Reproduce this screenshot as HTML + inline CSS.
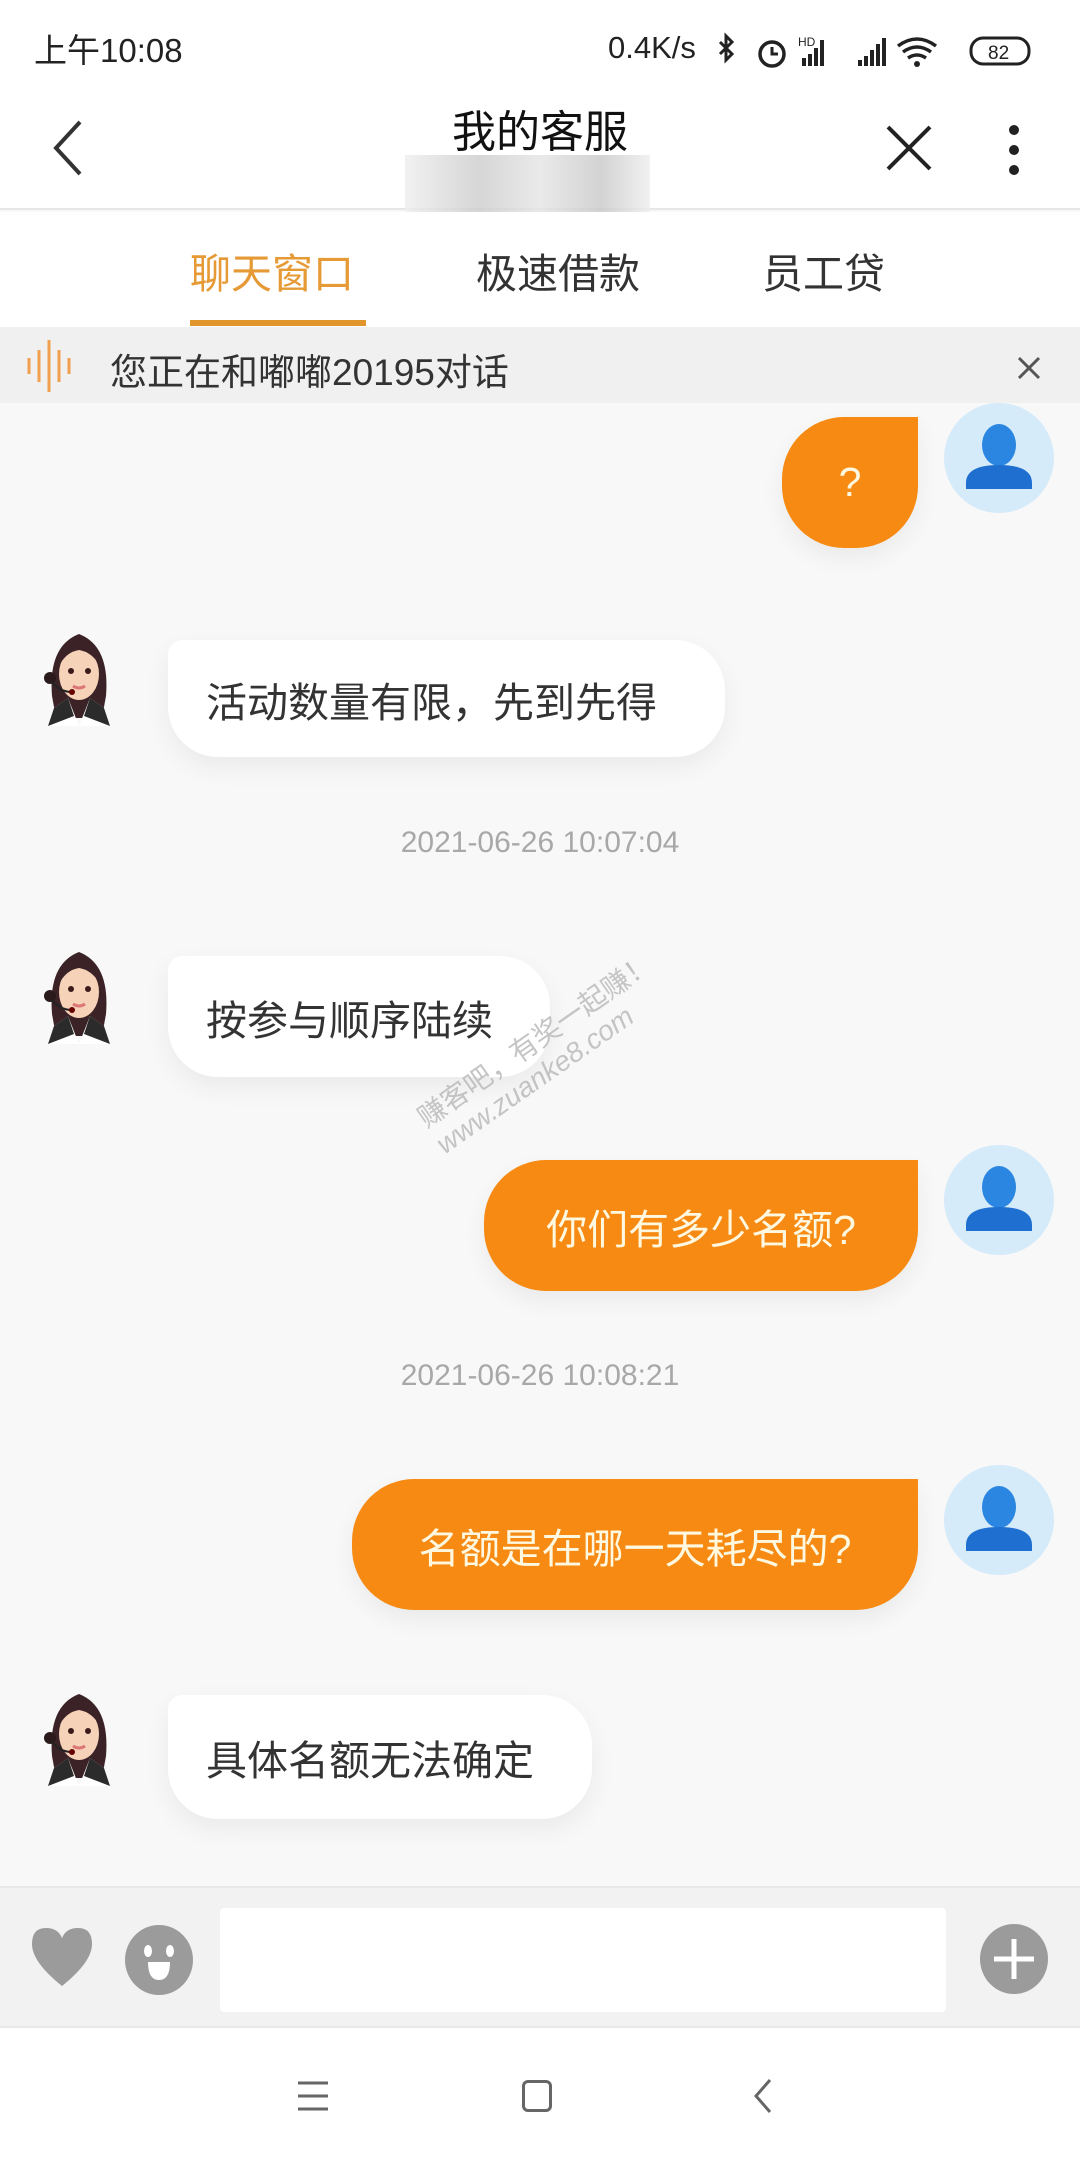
<!DOCTYPE html>
<html><head><meta charset="utf-8"><style>
*{margin:0;padding:0;box-sizing:border-box}
body{width:1080px;height:2158px;background:#f8f8f8;font-family:"Liberation Sans","Noto Sans CJK SC",sans-serif;position:relative;overflow:hidden;color:#333}
.abs{position:absolute}
.top{left:0;top:0;width:1080px;height:210px;background:#fff;border-bottom:2px solid #e6e6e6}
.tabs{left:0;top:212px;width:1080px;height:115px;background:#fff}
.notice{left:0;top:327px;width:1080px;height:76px;background:#f0f0f0}
.ob{background:#f68a12;color:#fff8e0;border-radius:62px 0 62px 62px;font-size:41px;display:flex;align-items:center;justify-content:center;box-shadow:0 10px 24px rgba(0,0,0,.06)}
.wb{background:#fff;border-radius:14px 50px 50px 50px;font-size:41px;color:#333;display:flex;align-items:center;padding-left:38px;box-shadow:0 10px 26px rgba(0,0,0,.06)}
.ts{width:1080px;left:0;text-align:center;font-size:30px;color:#a8a8a8}
.av{width:110px;height:110px;border-radius:55px;background:#d6ebfa}
</style></head><body>
<svg width="0" height="0" style="position:absolute"><defs>
<g id="user"><ellipse cx="55" cy="42" rx="17" ry="21" fill="#2a86e0"/><path d="M22 80 Q22 62 55 62 Q88 62 88 80 L88 86 L22 86Z" fill="#1e6fd0"/></g>
<g id="girl">
<path d="M8 70 Q4 20 35 8 Q66 20 62 70 L58 92 L12 92Z" fill="#3a2226"/>
<ellipse cx="35" cy="48" rx="20" ry="26" fill="#f6d2b8"/>
<path d="M15 40 Q20 16 35 14 Q52 16 56 40 Q48 26 35 24 Q22 26 15 40Z" fill="#3a2226"/>
<circle cx="27" cy="45" r="3" fill="#3a1a1a"/><circle cx="44" cy="45" r="3" fill="#3a1a1a"/>
<path d="M29 60 Q35 64 41 60" stroke="#d77" stroke-width="3" fill="none"/>
<circle cx="6" cy="52" r="6" fill="#2a1a1c"/><path d="M8 56 Q16 66 28 66" stroke="#222" stroke-width="2" fill="none"/><circle cx="28" cy="66" r="3" fill="#600"/>
<path d="M24 72 L35 100 L46 72 L60 82 L66 100 L4 100 L10 82Z" fill="#fff"/>
<path d="M4 100 L10 82 L24 72 L30 90Z M66 100 L60 82 L46 72 L40 90Z" fill="#2b2b2b"/>
</g></defs></svg>

<div class="abs top"></div>
<div class="abs" style="left:34px;top:24px;font-size:33px;color:#222">上午10:08</div>
<div class="abs" style="left:608px;top:30px;font-size:31px;color:#222">0.4K/s</div>
<svg class="abs" style="left:712px;top:32px" width="330" height="40" viewBox="0 0 330 40">
<path d="M8 10 L20 22 L14 28 L14 4 L20 10 L8 22" stroke="#222" stroke-width="3" fill="none"/>
<circle cx="60" cy="22" r="12" stroke="#222" stroke-width="3.5" fill="none"/><path d="M60 15 V22 H66" stroke="#222" stroke-width="3" fill="none"/>
<text x="86" y="14" font-size="12" font-family="Liberation Sans" fill="#222">HD</text>
<g fill="#222"><rect x="90" y="26" width="4" height="8"/><rect x="96" y="22" width="4" height="12"/><rect x="102" y="16" width="4" height="18"/><rect x="108" y="8" width="4" height="26"/>
<rect x="146" y="28" width="4" height="6"/><rect x="152" y="24" width="4" height="10"/><rect x="158" y="18" width="4" height="16"/><rect x="164" y="12" width="4" height="22"/><rect x="170" y="6" width="4" height="28"/></g>
<path d="M186 14 Q205 0 224 14 M191 20 Q205 10 219 20 M196 26 Q205 20 214 26" stroke="#222" stroke-width="3.5" fill="none"/><circle cx="205" cy="32" r="3" fill="#222"/>
<rect x="259" y="6" width="58" height="26" rx="12" stroke="#222" stroke-width="3" fill="none"/><text x="276" y="27" font-size="19" font-family="Liberation Sans" fill="#222">82</text>
</svg>
<div class="abs" style="left:0;width:1080px;top:96px;text-align:center;font-size:44px;color:#111">我的客服</div>
<div class="abs" style="left:405px;top:155px;width:245px;height:58px;background:linear-gradient(90deg,#eee,#ccc 30%,#e4e4e4 55%,#c8c8c8 80%,#eee);opacity:.8"></div>
<svg class="abs" style="left:50px;top:118px" width="40" height="60"><path d="M30 4 L6 30 L30 56" stroke="#333" stroke-width="4" fill="none"/></svg>
<svg class="abs" style="left:884px;top:123px" width="50" height="50"><path d="M4 4 L46 46 M46 4 L4 46" stroke="#222" stroke-width="4"/></svg>
<div class="abs" style="left:1009px;top:125px;width:10px;height:10px;border-radius:5px;background:#222"></div>
<div class="abs" style="left:1009px;top:145px;width:10px;height:10px;border-radius:5px;background:#222"></div>
<div class="abs" style="left:1009px;top:165px;width:10px;height:10px;border-radius:5px;background:#222"></div>

<div class="abs tabs"></div>
<div class="abs" style="left:190px;top:240px;font-size:41px;color:#e69a35">聊天窗口</div>
<div class="abs" style="left:476px;top:240px;font-size:41px;color:#333">极速借款</div>
<div class="abs" style="left:762px;top:240px;font-size:41px;color:#333">员工贷</div>
<div class="abs" style="left:190px;top:320px;width:176px;height:6px;background:#e1962d"></div>

<div class="abs notice"></div>
<svg class="abs" style="left:26px;top:338px" width="52" height="56"><g stroke="#f0a050" stroke-width="3"><path d="M3 20V36M13 12V44M23 2V54M33 12V44M43 20V36"/></g></svg>
<div class="abs" style="left:110px;top:342px;font-size:37px;color:#333">您正在和嘟嘟20195对话</div>
<svg class="abs" style="left:1016px;top:355px" width="26" height="26"><path d="M3 3 L23 23 M23 3 L3 23" stroke="#555" stroke-width="3"/></svg>

<div class="abs ob" style="left:782px;top:417px;width:136px;height:131px">?</div>
<div class="abs av" style="left:944px;top:403px"><svg width="110" height="110"><use href="#user"/></svg></div>

<svg class="abs" style="left:44px;top:626px" width="76" height="104"><use href="#girl"/></svg>
<div class="abs wb" style="left:168px;top:640px;width:557px;height:117px">活动数量有限，先到先得</div>
<div class="abs ts" style="top:826px">2021-06-26 10:07:04</div>

<svg class="abs" style="left:44px;top:944px" width="76" height="104"><use href="#girl"/></svg>
<div class="abs wb" style="left:168px;top:956px;width:382px;height:121px">按参与顺序陆续</div>

<div class="abs" style="left:412px;top:1108px;transform:rotate(-35deg);transform-origin:left top;color:#bbb;font-size:28px;line-height:32px;width:280px;opacity:.85">赚客吧，有奖一起赚！<br><span style="font-style:italic">www.zuanke8.com</span></div>

<div class="abs ob" style="left:484px;top:1160px;width:434px;height:131px">你们有多少名额?</div>
<div class="abs av" style="left:944px;top:1145px"><svg width="110" height="110"><use href="#user"/></svg></div>
<div class="abs ts" style="top:1359px">2021-06-26 10:08:21</div>

<div class="abs ob" style="left:352px;top:1479px;width:566px;height:131px">名额是在哪一天耗尽的?</div>
<div class="abs av" style="left:944px;top:1465px"><svg width="110" height="110"><use href="#user"/></svg></div>

<svg class="abs" style="left:44px;top:1686px" width="76" height="104"><use href="#girl"/></svg>
<div class="abs wb" style="left:168px;top:1695px;width:424px;height:124px">具体名额无法确定</div>

<div class="abs" style="left:0;top:1886px;width:1080px;height:142px;background:#f2f2f2;border-top:2px solid #e8e8e8;border-bottom:2px solid #e8e8e8"></div>
<div class="abs" style="left:220px;top:1908px;width:726px;height:104px;background:#fff;border-radius:4px"></div>
<svg class="abs" style="left:28px;top:1924px" width="70" height="70"><path d="M34 62 Q4 38 4 20 Q4 4 18 4 Q30 4 34 14 Q38 4 50 4 Q64 4 64 20 Q64 38 34 62Z" fill="#9b9b9b"/></svg>
<svg class="abs" style="left:124px;top:1924px" width="70" height="72"><ellipse cx="35" cy="36" rx="34" ry="35" fill="#9b9b9b"/><ellipse cx="24" cy="27" rx="4" ry="6" fill="#fff"/><ellipse cx="46" cy="27" rx="4" ry="6" fill="#fff"/><path d="M24 38 H46 Q46 56 35 56 Q24 56 24 38Z" fill="#fff"/></svg>
<svg class="abs" style="left:979px;top:1923px" width="70" height="72"><ellipse cx="35" cy="36" rx="34" ry="35" fill="#9b9b9b"/><path d="M35 16 V56 M15 36 H55" stroke="#fff" stroke-width="5"/></svg>

<div class="abs" style="left:0;top:2028px;width:1080px;height:130px;background:#fff"></div>
<svg class="abs" style="left:296px;top:2080px" width="36" height="34"><path d="M2 3H32M2 16H32M2 29H32" stroke="#666" stroke-width="3"/></svg>
<div class="abs" style="left:522px;top:2080px;width:30px;height:32px;border:3px solid #666;border-radius:6px"></div>
<svg class="abs" style="left:752px;top:2078px" width="24" height="36"><path d="M18 2 L4 18 L18 34" stroke="#666" stroke-width="3" fill="none"/></svg>
</body></html>
